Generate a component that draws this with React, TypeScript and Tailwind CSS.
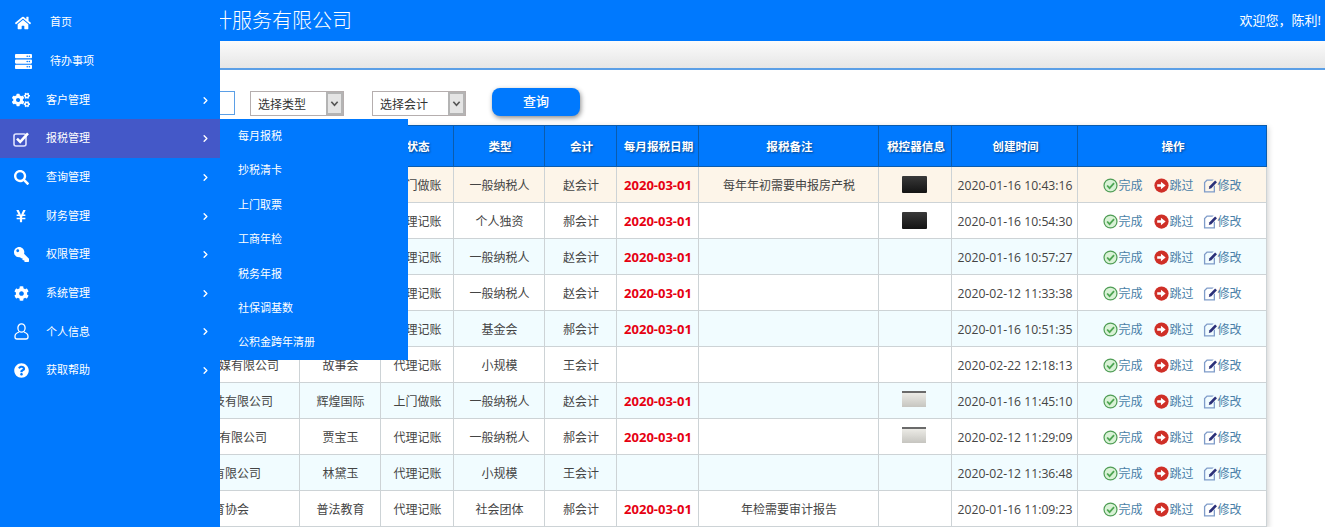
import { ChevronRight } from "lucide-react";
import {
  FaCog,
  FaCogs,
  FaHome,
  FaKey,
  FaQuestionCircle,
  FaSearch,
  FaServer,
  FaYenSign,
} from "react-icons/fa";

type Row = {
  company: string;
  contact: string;
  status: string;
  kind: string;
  accountant: string;
  taxDate: string;
  note: string;
  device: "" | "black" | "silver";
  created: string;
};

const rows: Row[] = [
  { company: "", contact: "", status: "上门做账", kind: "一般纳税人", accountant: "赵会计", taxDate: "2020-03-01", note: "每年年初需要申报房产税", device: "black", created: "2020-01-16 10:43:16" },
  { company: "", contact: "", status: "代理记账", kind: "个人独资", accountant: "郝会计", taxDate: "2020-03-01", note: "", device: "black", created: "2020-01-16 10:54:30" },
  { company: "", contact: "", status: "代理记账", kind: "一般纳税人", accountant: "赵会计", taxDate: "2020-03-01", note: "", device: "", created: "2020-01-16 10:57:27" },
  { company: "", contact: "", status: "代理记账", kind: "一般纳税人", accountant: "赵会计", taxDate: "2020-03-01", note: "", device: "", created: "2020-02-12 11:33:38" },
  { company: "", contact: "", status: "代理记账", kind: "基金会", accountant: "郝会计", taxDate: "2020-03-01", note: "", device: "", created: "2020-01-16 10:51:35" },
  { company: "故事会文化传媒有限公司", contact: "故事会", status: "代理记账", kind: "小规模", accountant: "王会计", taxDate: "", note: "", device: "", created: "2020-02-22 12:18:13" },
  { company: "辉煌国际科技有限公司", contact: "辉煌国际", status: "上门做账", kind: "一般纳税人", accountant: "赵会计", taxDate: "2020-03-01", note: "", device: "silver", created: "2020-01-16 11:45:10" },
  { company: "贾宝玉贸易有限公司", contact: "贾宝玉", status: "代理记账", kind: "一般纳税人", accountant: "郝会计", taxDate: "2020-03-01", note: "", device: "silver", created: "2020-02-12 11:29:09" },
  { company: "黛玉商贸有限公司", contact: "林黛玉", status: "代理记账", kind: "小规模", accountant: "王会计", taxDate: "", note: "", device: "", created: "2020-02-12 11:36:48" },
  { company: "普法教育协会", contact: "普法教育", status: "代理记账", kind: "社会团体", accountant: "郝会计", taxDate: "2020-03-01", note: "年检需要审计报告", device: "", created: "2020-01-16 11:09:23" },
];

function CheckBoxIcon() {
  return (
    <svg viewBox="0 0 17 16" className="h-[16px] w-[17px]">
      <rect x="1" y="3" width="12" height="12" rx="2" fill="none" stroke="#dfe3ff" strokeWidth="1.6" />
      <path d="M4 7.6l3.2 3.2L15 2.4" fill="none" stroke="#fff" strokeWidth="2.6" />
    </svg>
  );
}

function UserIcon() {
  return (
    <svg viewBox="0 0 15 17" className="h-[17px] w-[15px]">
      <ellipse cx="7.5" cy="5" rx="3.6" ry="4.2" fill="none" stroke="#fff" strokeWidth="1.3" />
      <path
        d="M5 9C2.5 10 1 11.2 1 13.2V14c0 1.2.8 2 2 2h9c1.2 0 2-.8 2-2v-.8c0-2-1.5-3.2-4-4.2"
        fill="none"
        stroke="#fff"
        strokeWidth="1.3"
      />
    </svg>
  );
}

const menu = [
  { label: "首页", icon: <FaHome size={16} />, top: true },
  { label: "待办事项", icon: <FaServer size={17} />, top: true },
  { label: "客户管理", icon: <FaCogs size={18} /> },
  { label: "报税管理", icon: <CheckBoxIcon />, active: true },
  { label: "查询管理", icon: <FaSearch size={15} /> },
  { label: "财务管理", icon: <FaYenSign size={14} /> },
  { label: "权限管理", icon: <FaKey size={15} className="-scale-x-100" /> },
  { label: "系统管理", icon: <FaCog size={15} /> },
  { label: "个人信息", icon: <UserIcon /> },
  { label: "获取帮助", icon: <FaQuestionCircle size={15} /> },
];

const subMenu = ["每月报税", "抄税清卡", "上门取票", "工商年检", "税务年报", "社保调基数", "公积金跨年清册"];

const th = "border border-[#0b5cad] pl-[2px] pt-[1px] text-[11.6px] font-bold text-white [text-shadow:1px_1px_2px_rgba(0,0,0,0.45)]";
const td = "border border-[#cdd3d6] pl-[1px] pt-[3px] text-center text-[#444]";

function DoneIcon() {
  return (
    <svg viewBox="0 0 16 16" className="-mt-[2px] h-[15px] w-[15px] shrink-0">
      <circle cx="8" cy="8" r="6.9" fill="#d9f2d6" stroke="#4f9d55" strokeWidth="1.3" />
      <path d="M4.4 8l2.6 2.8 4.8-5.4" fill="none" stroke="#4fa653" strokeWidth="1.9" />
    </svg>
  );
}

function SkipIcon() {
  return (
    <svg viewBox="0 0 16 16" className="-mt-[2px] h-[15px] w-[15px] shrink-0">
      <circle cx="8" cy="8" r="7.6" fill="#cf2f27" />
      <path d="M3.4 6.6h4V3.9L12.4 8l-5 4.1V9.4h-4z" fill="#fff" />
    </svg>
  );
}

function EditIcon() {
  return (
    <svg viewBox="0 0 16 16" className="-mt-[2px] h-[15px] w-[15px] shrink-0">
      <path d="M4 1.5h7.5l-1.6 1.5H4.6L2.4 5v9h9V9l1.4-1.4v7.9H1V4.5z" fill="#7f9cc9" />
      <path d="M6.2 11.8l.7-2.9 6-6.3 2 2-6 6.3z" fill="#2b2f78" />
    </svg>
  );
}

function Device({ type }: { type: Row["device"] }) {
  if (type === "black") {
    return <div className="-mt-[4px] ml-[22px] h-[17px] w-[25px] rounded-[1px] bg-gradient-to-b from-[#3a3a3a] to-[#141414]" />;
  }
  if (type === "silver") {
    return (
      <div className="-mt-[6px] ml-[22px] h-[16px] w-[24px] border-t-2 border-[#6a6a6a] bg-gradient-to-b from-[#ecebe6] to-[#c6c5c0]" />
    );
  }
  return null;
}

function FakeSelect({ label, className }: { label: string; className: string }) {
  return (
    <div className={`mt-[3px] flex h-[25px] w-[94px] border border-[#b5aeae] bg-white ${className}`}>
      <span className="flex-1 pl-[7px] leading-[25px] text-[#333]">{label}</span>
      <span className="flex w-[17px] items-center justify-center border-2 border-[#b4b4b4] bg-[#e4e4e4]">
        <svg viewBox="0 0 10 10" className="h-[9px] w-[9px]">
          <path d="M1.5 3l3.5 4 3.5-4" fill="none" stroke="#555" strokeWidth="1.8" />
        </svg>
      </span>
    </div>
  );
}

export default function App() {
  return (
    <div className="relative h-[527px] w-[1325px] overflow-hidden bg-white font-['Open_Sans','Noto_Sans_CJK_SC',sans-serif] text-[12px]">
      {/* Header */}
      <header className="flex h-[41px] items-center justify-between bg-[#0079fe] pl-[192px] pr-[4px] text-white">
        <h1 className="text-[20px] font-light">会计服务有限公司</h1>
        <span className="text-[13px]">欢迎您，陈利!</span>
      </header>
      <div className="h-[29px] border-b-2 border-[#5b9fe6] bg-gradient-to-b from-[#fbfbfb] to-[#e6e6e6]" />

      {/* Filters */}
      <div className="flex h-[55px] items-start pl-[100px] pt-[18px]">
        <input className="mt-[3px] h-[24px] w-[135px] border border-[#5b9fe6] bg-white outline-none" />
        <FakeSelect label="选择类型" className="ml-[15px]" />
        <FakeSelect label="选择会计" className="ml-[28px]" />
        <button className="ml-[26px] h-[28px] w-[88px] rounded-lg bg-[#0079fe] text-[13px] font-medium text-white shadow-[1px_2px_5px_rgba(0,0,0,0.45)]">
          查询
        </button>
      </div>

      {/* Table */}
      <div className="ml-[20px] w-[1246px] shadow-[2px_2px_6px_rgba(0,0,0,0.2)]">
        <table className="w-full table-fixed border-collapse">
          <colgroup>
            <col className="w-[105px]" />
            <col className="w-[174px]" />
            <col className="w-[81px]" />
            <col className="w-[73px]" />
            <col className="w-[91px]" />
            <col className="w-[72px]" />
            <col className="w-[82px]" />
            <col className="w-[180px]" />
            <col className="w-[73px]" />
            <col className="w-[126px]" />
            <col className="w-[189px]" />
          </colgroup>
          <thead>
            <tr className="h-[41px] bg-[#0079fe]">
              <th className={th}></th>
              <th className={th}></th>
              <th className={th}></th>
              <th className={th}>状态</th>
              <th className={th}>类型</th>
              <th className={th}>会计</th>
              <th className={th}>每月报税日期</th>
              <th className={th}>报税备注</th>
              <th className={th}>税控器信息</th>
              <th className={th}>创建时间</th>
              <th className={th}>操作</th>
            </tr>
          </thead>
          <tbody>
            {rows.map((row, i) => (
              <tr
                key={row.created}
                className={
                  i === 0
                    ? "h-[36px] border-b border-b-[#cf1f27] bg-[#fdf5e9]"
                    : i % 2 === 0
                      ? "h-[36px] bg-[#f1fcff]"
                      : "h-[36px] bg-white"
                }
              >
                <td className={td}></td>
                <td className={td}>{row.company}</td>
                <td className={td}>{row.contact}</td>
                <td className={td}>{row.status}</td>
                <td className={td}>{row.kind}</td>
                <td className={td}>{row.accountant}</td>
                <td className={`${td} text-[13px] font-bold !text-[#e60012]`}>{row.taxDate}</td>
                <td className={td}>{row.note}</td>
                <td className={td}>
                  <Device type={row.device} />
                </td>
                <td className={`${td} text-[12.2px]`}>{row.created}</td>
                <td className={td}>
                  <div className="flex items-center justify-center text-[#4a7fa8]">
                    <a className="flex items-center"><DoneIcon />完成</a>
                    <a className="ml-[12px] flex items-center"><SkipIcon />跳过</a>
                    <a className="ml-[9px] flex items-center"><EditIcon />修改</a>
                  </div>
                </td>
              </tr>
            ))}
          </tbody>
        </table>
      </div>

      {/* Sidebar */}
      <nav className="absolute left-0 top-0 h-full w-[220px] bg-[#0079fe] pt-[3.4px] text-[11px] text-white">
        {menu.map((item) => (
          <div
            key={item.label}
            className={`flex h-[38.67px] items-center ${item.active ? "bg-[#4458c8]" : ""}`}
          >
            <span className={`flex shrink-0 justify-center ${item.top ? "w-[50px] pr-[4px]" : "w-[46px] pr-[4px]"}`}>
              {item.icon}
            </span>
            <span>{item.label}</span>
            {!item.top && <ChevronRight size={11} strokeWidth={3} className="ml-auto mr-[9px]" />}
          </div>
        ))}
      </nav>

      {/* Submenu */}
      <ul className="absolute left-[220px] top-[119px] w-[188px] bg-[#0079fe] text-[11px] text-white">
        {subMenu.map((label) => (
          <li key={label} className="flex h-[34.43px] items-center pl-[18px]">
            {label}
          </li>
        ))}
      </ul>
    </div>
  );
}
